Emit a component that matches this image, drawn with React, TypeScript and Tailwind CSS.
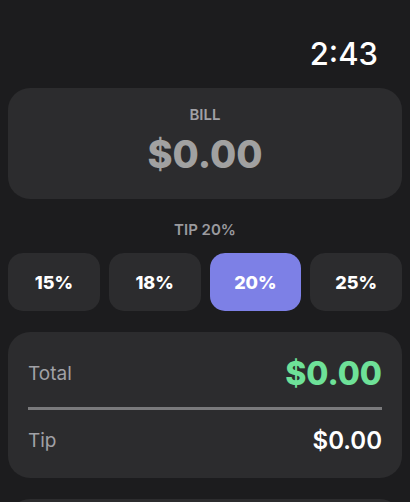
import { useState } from "react";

const tips = [15, 18, 20, 25];

const App = () => {
  const [tip, setTip] = useState(20);
  const bill = 0;
  const tipAmount = (bill * tip) / 100;
  const total = bill + tipAmount;

  return (
    <div className="min-h-screen bg-[#1c1c1e] px-2 pb-8 text-white" style={{ fontFamily: "Inter, 'Liberation Sans', sans-serif" }}>
      <div className="flex h-[88px] items-start justify-end pr-[24px] pt-[36px]">
        <span className="text-[31px] font-medium leading-[36px]">2:43</span>
      </div>

      <div className="flex h-[111px] flex-col items-center rounded-[22px] bg-[#2c2c2e] pt-[17px]">
        <span className="text-[15px] font-semibold leading-[20px] text-[#a1a1a6]">BILL</span>
        <span className="mt-[5px] text-[38px] font-extrabold leading-[48px] text-[#a1a1a1]">
          ${bill.toFixed(2)}
        </span>
      </div>

      <div className="mt-[21px] text-center text-[15px] font-semibold leading-[20px] text-[#9a9a9e]">TIP {tip}%</div>

      <div className="mt-[13px] grid grid-cols-4 gap-[9px]">
        {tips.map((t) => (
          <button
            key={t}
            onClick={() => setTip(t)}
            className={`h-[58px] rounded-[15px] text-[18px] font-extrabold ${
              t === tip ? "bg-[#7d80e6]" : "bg-[#2c2c2e]"
            }`}
          >
            {t}%
          </button>
        ))}
      </div>

      <div className="mt-[21px] rounded-[22px] bg-[#2c2c2e] px-[20px] pb-[21px] pt-[22px]">
        <div className="flex items-center justify-between">
          <span className="text-[19px] leading-[24px] text-[#a1a1a6]">Total</span>
          <span className="text-[32px] font-extrabold leading-[40px] text-[#6ee198]">${total.toFixed(2)}</span>
        </div>
        <div className="mt-[13px] h-[3px] bg-[#7a7a7c]" />
        <div className="mt-[15px] flex items-center justify-between">
          <span className="text-[19px] leading-[24px] text-[#a1a1a6]">Tip</span>
          <span className="text-[24px] font-semibold leading-[32px]">${tipAmount.toFixed(2)}</span>
        </div>
      </div>

      <div className="mt-[21px] h-[120px] rounded-[22px] bg-[#2c2c2e]" />
    </div>
  );
};

export default App;
